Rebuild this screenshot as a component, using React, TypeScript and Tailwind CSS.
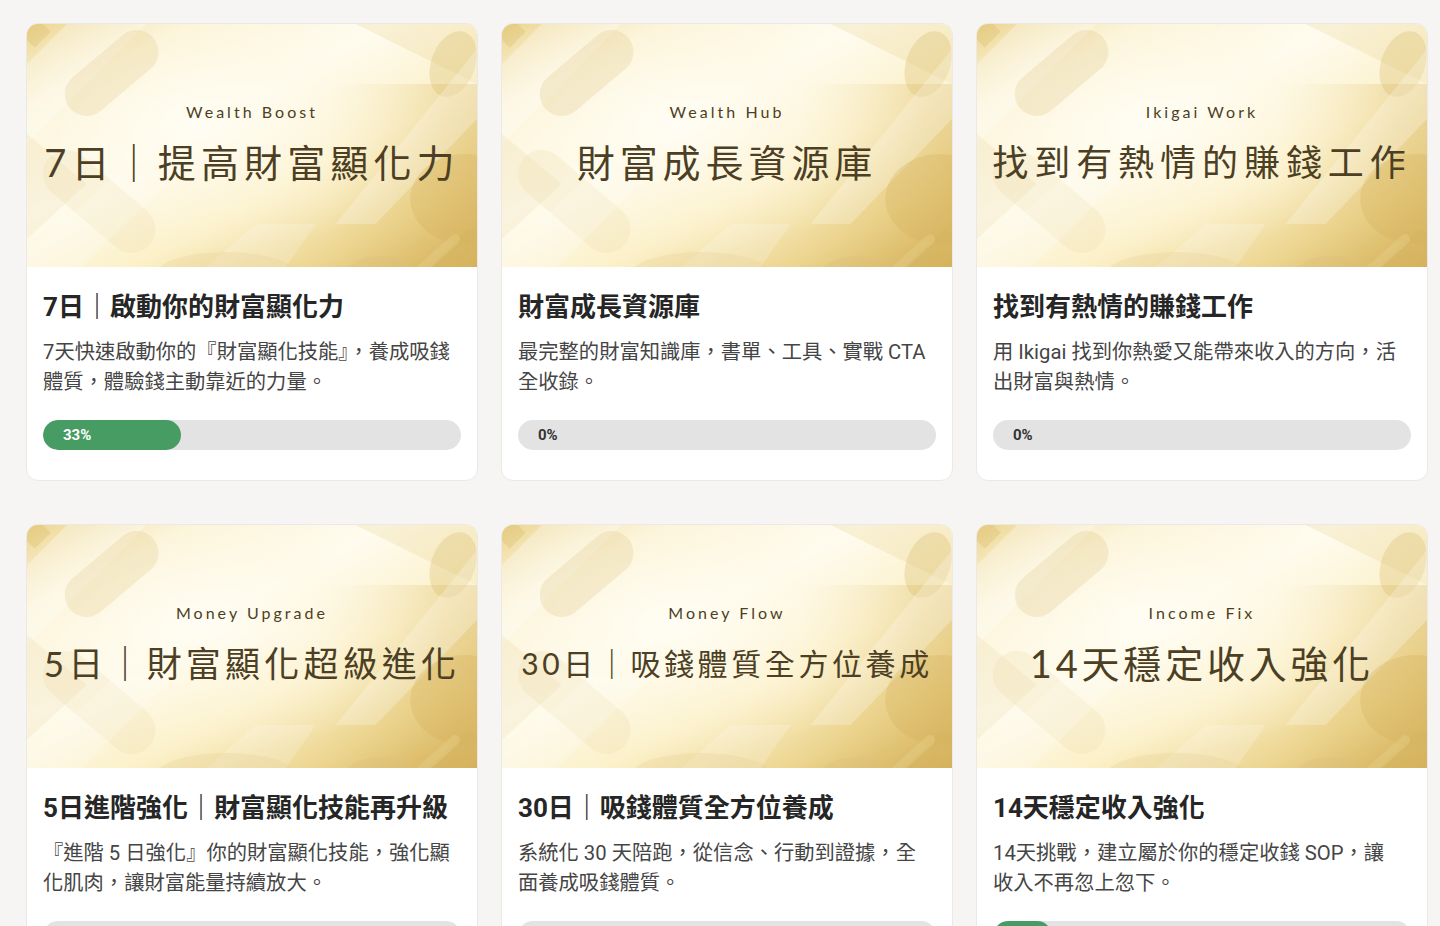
import React from "react";

type Course = {
  tag: string;
  banner: string;
  bannerSize: string;
  title: string;
  lines: string[];
  progress: number;
};

const courses: Course[] = [
  {
    tag: "Wealth Boost",
    banner: "7日｜提高財富顯化力",
    bannerSize: "text-[38px] tracking-[0.135em]",
    title: "7日｜啟動你的財富顯化力",
    lines: ["7天快速啟動你的『財富顯化技能』，養成吸錢", "體質，體驗錢主動靠近的力量。"],
    progress: 33,
  },
  {
    tag: "Wealth Hub",
    banner: "財富成長資源庫",
    bannerSize: "text-[38px] tracking-[0.13em]",
    title: "財富成長資源庫",
    lines: ["最完整的財富知識庫，書單、工具、實戰 CTA", "全收錄。"],
    progress: 0,
  },
  {
    tag: "Ikigai Work",
    banner: "找到有熱情的賺錢工作",
    bannerSize: "text-[36px] tracking-[0.165em]",
    title: "找到有熱情的賺錢工作",
    lines: ["用 Ikigai 找到你熱愛又能帶來收入的方向，活", "出財富與熱情。"],
    progress: 0,
  },
  {
    tag: "Money Upgrade",
    banner: "5日｜財富顯化超級進化",
    bannerSize: "text-[35px] tracking-[0.12em]",
    title: "5日進階強化｜財富顯化技能再升級",
    lines: ["『進階 5 日強化』你的財富顯化技能，強化顯", "化肌肉，讓財富能量持續放大。"],
    progress: 0,
  },
  {
    tag: "Money Flow",
    banner: "30日｜吸錢體質全方位養成",
    bannerSize: "text-[30px] tracking-[0.12em]",
    title: "30日｜吸錢體質全方位養成",
    lines: ["系統化 30 天陪跑，從信念、行動到證據，全", "面養成吸錢體質。"],
    progress: 0,
  },
  {
    tag: "Income Fix",
    banner: "14天穩定收入強化",
    bannerSize: "text-[38px] tracking-[0.1em]",
    title: "14天穩定收入強化",
    lines: ["14天挑戰，建立屬於你的穩定收錢 SOP，讓", "收入不再忽上忽下。"],
    progress: 14,
  },
];

// gold foil backdrop, same picture on every card
const GoldBackdrop = ({ id }: { id: string }) => (
  <svg className="absolute inset-0 w-full h-full" viewBox="0 0 452 243" preserveAspectRatio="none">
    <defs>
      <linearGradient id={`bg-${id}`} x1="0" y1="0" x2="1" y2="1">
        <stop offset="0" stopColor="#ecd38c" />
        <stop offset="0.18" stopColor="#fbf3d6" />
        <stop offset="0.4" stopColor="#fffcf0" />
        <stop offset="0.62" stopColor="#fbf0c8" />
        <stop offset="0.82" stopColor="#ecd590" />
        <stop offset="1" stopColor="#d2ad55" />
      </linearGradient>
      <radialGradient id={`glow-${id}`} cx="0.38" cy="0.4" r="0.55">
        <stop offset="0" stopColor="#fffdf4" stopOpacity="0.95" />
        <stop offset="0.6" stopColor="#fff9e6" stopOpacity="0.4" />
        <stop offset="1" stopColor="#fff9e6" stopOpacity="0" />
      </radialGradient>
      <linearGradient id={`edge-${id}`} x1="0" y1="0" x2="1" y2="0">
        <stop offset="0" stopColor="#e6c877" stopOpacity="0" />
        <stop offset="1" stopColor="#d9b661" stopOpacity="0.8" />
      </linearGradient>
    </defs>
    <rect width="452" height="243" fill={`url(#bg-${id})`} />
    <rect x="300" y="60" width="152" height="183" fill={`url(#edge-${id})`} opacity="0.5" />
    <rect width="452" height="243" fill={`url(#glow-${id})`} />

    {/* top left */}
    <path d="M0 40 L40 0 L120 0 L0 120 Z" fill="#ffffff" opacity="0.3" />
    <line x1="60" y1="70" x2="110" y2="28" stroke="#d9bd72" strokeWidth="44" strokeLinecap="round" opacity="0.22" />
    <line x1="0" y1="16" x2="16" y2="0" stroke="#d7b864" strokeWidth="22" opacity="0.3" />

    {/* left middle */}
    <path d="M0 110 L60 160 L0 215 Z" fill="#e8d49a" opacity="0.2" />
    <line x1="40" y1="150" x2="105" y2="205" stroke="#ecd9a0" strokeWidth="48" strokeLinecap="round" opacity="0.22" />
    <path d="M0 230 L90 150 L150 150 L55 243 L0 243 Z" fill="#ffffff" opacity="0.2" />

    {/* top right */}
    <path d="M330 0 L452 0 L452 60 Z" fill="#e7cf86" opacity="0.25" />
    <ellipse cx="428" cy="40" rx="22" ry="34" transform="rotate(20 428 40)" fill="#d8ba66" opacity="0.3" />
    <path d="M452 25 L452 95 L350 200 L310 200 Z" fill="#ffffff" opacity="0.25" />

    {/* right side dark sheen */}
    <ellipse cx="440" cy="175" rx="55" ry="45" fill="#d3b059" opacity="0.3" />

    {/* bottom */}
    <ellipse cx="355" cy="262" rx="42" ry="30" fill="#dcc07a" opacity="0.35" />
    <line x1="410" y1="250" x2="445" y2="215" stroke="#d5b461" strokeWidth="18" strokeLinecap="round" opacity="0.4" />
    <line x1="380" y1="260" x2="430" y2="215" stroke="#e6cf8a" strokeWidth="10" strokeLinecap="round" opacity="0.4" />
    <path d="M180 243 L230 200 L290 200 L260 243 Z" fill="#ffffff" opacity="0.2" />
    <ellipse cx="200" cy="250" rx="70" ry="22" fill="#e9d294" opacity="0.3" />
  </svg>
);

const CourseCard = ({ course, index }: { course: Course; index: number }) => {
  const done = course.progress > 0;

  return (
    <div className="bg-white rounded-xl border border-[#ebe9e5] overflow-hidden">
      <div className="relative h-[243px] flex flex-col items-center justify-center gap-4 pb-1 text-[#4c3f24]">
        <GoldBackdrop id={`c${index}`} />
        <p className="relative h-5 leading-5 text-[16px] tracking-[0.19em] font-['Lato','Noto_Sans_CJK_TC',sans-serif]">
          {course.tag}
        </p>
        <p className={`relative h-12 leading-[48px] whitespace-nowrap font-['Lato','Noto_Sans_CJK_TC',sans-serif] ${course.bannerSize}`}>
          {course.banner}
        </p>
      </div>

      <div className="px-4 pt-[22px] pb-[30px]">
        <h3 className="text-[26px] leading-9 font-bold text-[#262626]">{course.title}</h3>
        <div className="mt-3 text-[20.3px] leading-[30px] text-[#454545]">
          {course.lines.map((line, i) => (
            <p key={i} className="whitespace-nowrap">
              {line}
            </p>
          ))}
        </div>

        <div className="relative mt-[23px] h-[30px] rounded-full bg-[#e3e3e3] overflow-hidden">
          {done && <div className="h-full rounded-full bg-[#469c63]" style={{ width: `${course.progress}%` }} />}
          <span className={`absolute left-5 top-0 h-full flex items-center text-[15px] font-bold ${done ? "text-white" : "text-[#333333]"}`}>
            {course.progress}%
          </span>
        </div>
      </div>
    </div>
  );
}

export default function App() {
  return (
    <div className="min-h-screen bg-[#f6f5f3] pl-[26px] pr-3 pt-[23px] pb-10 font-['Roboto','Noto_Sans_CJK_TC',sans-serif]">
      <div className="grid grid-cols-3 gap-x-[23px] gap-y-[43px]">
        {courses.map((course, index) => (
          <CourseCard key={index} course={course} index={index} />
        ))}
      </div>
    </div>
  );
}
